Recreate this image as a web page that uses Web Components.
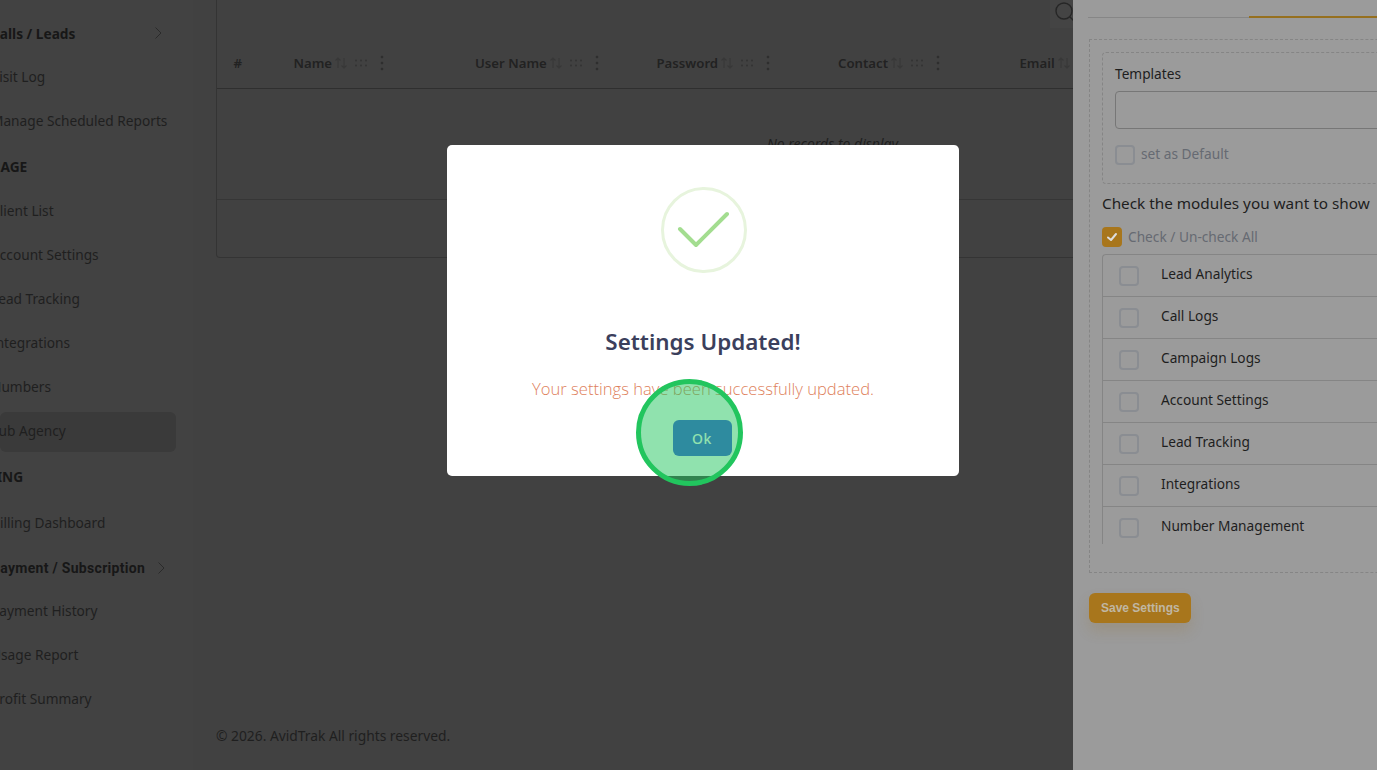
<!DOCTYPE html>
<html lang="en">
<head>
<meta charset="utf-8">
<title>Settings Updated</title>
<style>
  html, body { margin: 0; height: 100%; overflow: hidden; background: #414141; }
  body { font-family: "Noto Sans", "Open Sans", sans-serif; font-size: 13.7px; }
</style>
</head>
<body>
<app-page>
  <side-nav slot="nav">
    <nav-item bold chevron>Calls / Leads</nav-item>
    <nav-item>Visit Log</nav-item>
    <nav-item>Manage Scheduled Reports</nav-item>
    <nav-item heading>MANAGE</nav-item>
    <nav-item>Client List</nav-item>
    <nav-item>Account Settings</nav-item>
    <nav-item>Lead Tracking</nav-item>
    <nav-item>Integrations</nav-item>
    <nav-item>Numbers</nav-item>
    <nav-item active>Sub Agency</nav-item>
    <nav-item heading>BILLING</nav-item>
    <nav-item gap>Billing Dashboard</nav-item>
    <nav-item bold chevron roboto>Payment / Subscription</nav-item>
    <nav-item>Payment History</nav-item>
    <nav-item>Usage Report</nav-item>
    <nav-item>Profit Summary</nav-item>
  </side-nav>
  <data-table slot="main">
    <table-col slot="cols" plain>#</table-col>
    <table-col slot="cols">Name</table-col>
    <table-col slot="cols">User Name</table-col>
    <table-col slot="cols">Password</table-col>
    <table-col slot="cols">Contact</table-col>
    <table-col slot="cols">Email</table-col>
    No records to display.
  </data-table>
  <span slot="footer">© 2026. AvidTrak All rights reserved.</span>
  <settings-drawer slot="drawer">
    <module-row>Lead Analytics</module-row>
    <module-row>Call Logs</module-row>
    <module-row>Campaign Logs</module-row>
    <module-row>Account Settings</module-row>
    <module-row>Lead Tracking</module-row>
    <module-row>Integrations</module-row>
    <module-row>Number Management</module-row>
  </settings-drawer>
</app-page>
<alert-modal heading="Settings Updated!" message="Your settings have been successfully updated." confirm="Ok"></alert-modal>
<click-marker></click-marker>

<script>
// Colours are written as they look behind the backdrop, so there is no extra dimming layer

class AppPage extends HTMLElement {
  constructor() {
    super();
    this.shadow = this.attachShadow({ mode: 'open' });
  }
  connectedCallback() {
    this.shadow.innerHTML = `
      <style>
        :host { display: flex; height: 770px; overflow: hidden; }
        .main { flex: 1; min-width: 0; display: flex; flex-direction: column; padding: 0 0 24px 23px; }
        .footer { margin-top: auto; color: #1f1f1f; font-size: 13.800px; line-height: 20px; }
      </style>
      <slot name="nav"></slot>
      <div class="main">
        <slot name="main"></slot>
        <div class="footer"><slot name="footer"></slot></div>
      </div>
      <slot name="drawer"></slot>
    `;
  }
}

class SideNav extends HTMLElement {
  constructor() {
    super();
    this.shadow = this.attachShadow({ mode: 'open' });
  }
  connectedCallback() {
    this.shadow.innerHTML = `
      <style>
        :host { display: block; flex: none; width: 193px; height: 770px; overflow: hidden; background: #424242; box-sizing: border-box; padding-top: 10px; }
      </style>
      <slot></slot>
    `;
  }
}

class NavItem extends HTMLElement {
  constructor() {
    super();
    this.shadow = this.attachShadow({ mode: 'open' });
  }
  connectedCallback() {
    const chevron = this.hasAttribute('chevron')
      ? `<svg width="8" height="14" viewBox="0 0 8 14"><path d="M1.500 1.500l5.500 5.500-5.500 5.500" fill="none" stroke="#2a2a2a" stroke-width="1"/></svg>`
      : '';
    this.shadow.innerHTML = `
      <style>
        :host { display: block; height: 44px; margin-right: 17px; color: #1f1f1f; }
        :host([heading]) { margin-top: 2px; color: #171717; font-weight: 700; }
        :host([bold]) { color: #171717; font-weight: 700; }
        :host([roboto]) { font: 700 14px Roboto, sans-serif; letter-spacing: .3px; }
        :host([chevron]) { margin-right: 31px; }
        :host([gap]) { margin-top: 2px; }
        :host([active]) { height: 40px; margin-top: 4px; margin-bottom: 2px; background: #3a3a3a; border-radius: 6px; }
        .row { height: 100%; box-sizing: border-box; display: flex; align-items: center; gap: 12px; margin-left: -9px; white-space: nowrap; }
        :host([active]) .row { padding-bottom: 4px; }
        :host([heading]) .row { margin-left: -33px; }
        :host([bold]) .row { padding-top: 2px; justify-content: space-between; }
        :host([roboto]) .row { padding-top: 4px; }
        svg { flex: none; }
      </style>
      <div class="row"><span><slot></slot></span>${chevron}</div>
    `;
  }
}

class DataTable extends HTMLElement {
  constructor() {
    super();
    this.shadow = this.attachShadow({ mode: 'open' });
  }
  connectedCallback() {
    this.shadow.innerHTML = `
      <style>
        :host { display: block; flex: none; width: 1234px; border: solid #343434; border-width: 0 1px 1px; border-radius: 0 0 4px 4px; color: #1f1f1f; font-size: 14px; }
        .tools { height: 40px; display: flex; padding-left: 833px; }
        .search { width: 30px; height: 28px; background: #444; display: flex; }
        .cols { height: 49px; box-sizing: border-box; padding-bottom: 3px; display: flex; align-items: center; border-bottom: 1px solid #2f2f2f; }
        .empty { height: 111px; box-sizing: border-box; padding-bottom: 1px; display: flex; align-items: center; justify-content: center; font-style: italic; border-bottom: 1px solid #363636; }
        .pager { height: 57px; }
      </style>
      <div class="tools">
        <div class="search">
          <svg width="26" height="26" viewBox="0 0 26 26" style="margin-left:2px">
            <circle cx="12" cy="11" r="8" fill="none" stroke="#262626" stroke-width="1.400"/>
            <path d="M18 17l6 6" stroke="#262626" stroke-width="1.400"/>
          </svg>
        </div>
      </div>
      <div class="cols"><slot name="cols"></slot></div>
      <div class="empty"><slot></slot></div>
      <div class="pager"></div>
    `;
  }
}

class TableCol extends HTMLElement {
  constructor() {
    super();
    this.shadow = this.attachShadow({ mode: 'open' });
  }
  connectedCallback() {
    const tools = this.hasAttribute('plain') ? '' : `
      <svg class="sort" width="14" height="14" viewBox="0 0 14 14" fill="none" stroke="#383838" stroke-width="1.100">
        <path d="M4 12V2M1.500 4.500L4 2l2.500 2.500M10 2v10M7.500 9.500L10 12l2.500-2.500"/>
      </svg>
      <svg class="grip" width="14" height="8" viewBox="0 0 14 8" fill="#333">
        <circle cx="2" cy="1.500" r="1"/><circle cx="7" cy="1.500" r="1"/><circle cx="12" cy="1.500" r="1"/>
        <circle cx="2" cy="6.500" r="1"/><circle cx="7" cy="6.500" r="1"/><circle cx="12" cy="6.500" r="1"/>
      </svg>
      <svg class="more" width="4" height="16" viewBox="0 0 4 16" fill="#2e2e2e">
        <circle cx="2" cy="2" r="1.300"/><circle cx="2" cy="8" r="1.300"/><circle cx="2" cy="14" r="1.300"/>
      </svg>`;
    this.shadow.innerHTML = `
      <style>
        :host { display: flex; align-items: center; flex: none; width: 181.500px; font-size: 13.200px; font-weight: 600; color: #222; white-space: nowrap; }
        :host([plain]) { width: 76.500px; box-sizing: border-box; padding-left: 16.500px; }
        .sort { margin-left: 2px; }
        .grip { margin-left: 6px; }
        .more { margin-left: 12px; }
      </style>
      <slot></slot>${tools}
    `;
  }
}

class CheckBox extends HTMLElement {
  constructor() {
    super();
    this.shadow = this.attachShadow({ mode: 'open' });
  }
  connectedCallback() {
    const mark = this.hasAttribute('checked')
      ? `<svg width="12" height="12" viewBox="0 0 12 12"><path d="M2 6.500l3 2.500 5-6" fill="none" stroke="#ddd" stroke-width="2" stroke-linecap="round" stroke-linejoin="round"/></svg>`
      : '';
    this.shadow.innerHTML = `
      <style>
        :host { display: flex; flex: none; width: 20px; height: 20px; box-sizing: border-box; border: 2px solid #8a8d92; border-radius: 4px; align-items: center; justify-content: center; }
        :host([checked]) { background: #a8761c; border-color: #a8761c; }
      </style>
      ${mark}
    `;
  }
}

class ModuleRow extends HTMLElement {
  constructor() {
    super();
    this.shadow = this.attachShadow({ mode: 'open' });
  }
  connectedCallback() {
    this.shadow.innerHTML = `
      <style>
        :host { display: flex; align-items: center; flex: none; height: 42px; box-sizing: border-box; border-bottom: 1px solid #858585; padding-left: 16px; gap: 22px; color: #1e1e1e; }
        :host(:last-child) { border-bottom: 0; }
        span { margin-top: -5px; }
      </style>
      <check-box></check-box><span><slot></slot></span>
    `;
  }
}

class SettingsDrawer extends HTMLElement {
  constructor() {
    super();
    this.shadow = this.attachShadow({ mode: 'open' });
  }
  connectedCallback() {
    this.shadow.innerHTML = `
      <style>
        :host { display: block; position: fixed; top: 0; right: 0; bottom: 0; width: 304px; background: #9b9b9b; color: #1e1e1e; overflow: hidden; }
        .tabs { display: flex; height: 18px; margin-left: 15px; }
        .tabs div { box-sizing: border-box; border-bottom: 1px solid #868686; width: 161px; }
        .tabs .on { flex: 1; border-bottom: 2px solid #96701f; }
        .outer { width: 400px; margin: 21px 0 0 16px; height: 534px; box-sizing: border-box; border: 1px dashed #858585; padding: 12px 0 0 12px; }
        .inner { width: 400px; height: 132px; box-sizing: border-box; border: 1px dashed #858585; border-radius: 4px; padding: 11px 12px; }
        .label { line-height: 20px; }
        .input { width: 300px; height: 38px; margin-top: 7px; box-sizing: border-box; border: 1px solid #777; border-radius: 4px; }
        .line { display: flex; align-items: center; gap: 6px; color: #666a72; }
        .line span { margin-top: -2px; }
        .inner .line { margin-top: 16px; }
        .inner .line span { margin-top: -4px; }
        .show { margin-top: 8px; font-size: 15.300px; line-height: 22px; }
        .all { margin-top: 13px; }
        .list { width: 400px; height: 290px; margin-top: 7px; box-sizing: border-box; border: solid #858585; border-width: 1px 0 0 1px; border-radius: 4px 0 0 0; display: flex; flex-direction: column; overflow: hidden; }
        .save { display: inline-block; margin: 20px 0 0 16px; padding: 0 11px 0 12px; height: 30px; background: #a8761c; border-radius: 6px; color: #c0b7a3; font: 700 12px/30px "Liberation Sans", sans-serif; box-shadow: 0 8px 14px rgba(150,110,40,.2); }
      </style>
      <div class="tabs"><div></div><div class="on"></div></div>
      <div class="outer">
        <div class="inner">
          <div class="label">Templates</div>
          <div class="input"></div>
          <div class="line"><check-box></check-box><span>set as Default</span></div>
        </div>
        <div class="show">Check the modules you want to show</div>
        <div class="line all"><check-box checked></check-box><span>Check / Un-check All</span></div>
        <div class="list"><slot></slot></div>
      </div>
      <div class="save">Save Settings</div>
    `;
  }
}

class AlertModal extends HTMLElement {
  constructor() {
    super();
    this.shadow = this.attachShadow({ mode: 'open' });
  }
  connectedCallback() {
    this.shadow.innerHTML = `
      <style>
        :host { display: flex; flex-direction: column; align-items: center; position: fixed; left: 447px; top: 145px; width: 512px; height: 331px; background: #fff; border-radius: 5px; box-sizing: border-box; padding-top: 42px; }
        svg { display: block; margin-left: 2px; }
        h2 { margin: 53px 0 0; font: 600 22.400px/32px "Noto Sans", "Open Sans", sans-serif; color: #3b3f5c; }
        p { margin: 19px 0 0; font: 300 16.600px/24px "Open Sans", "Noto Sans", sans-serif; color: #de7f5c; }
        button { margin: 19px 2px 0 0; width: 59px; height: 36px; border: 0; border-radius: 6px; background: #3a51e0; color: #fff; font: 500 14px "Noto Sans", "Open Sans", sans-serif; letter-spacing: .5px; padding: 0; }
      </style>
      <svg width="86" height="86" viewBox="0 0 86 86">
        <circle cx="43" cy="43" r="41.500" fill="none" stroke="#e7f4dd" stroke-width="3"/>
        <path d="M19 42l16 16 31-31" fill="none" stroke="#a3dd90" stroke-width="4" stroke-linecap="round" stroke-linejoin="round"/>
      </svg>
      <h2>${this.getAttribute('heading')}</h2>
      <p>${this.getAttribute('message')}</p>
      <button type="button">${this.getAttribute('confirm')}</button>
    `;
  }
}

// Green ring of the recorded click, it lies over the modal
class ClickMarker extends HTMLElement {
  constructor() {
    super();
    this.shadow = this.attachShadow({ mode: 'open' });
  }
  connectedCallback() {
    this.shadow.innerHTML = `
      <style>
        :host { display: block; position: fixed; left: 636px; top: 379px; width: 107px; height: 107px; box-sizing: border-box; border: 5px solid #22c55e; border-radius: 50%; background: rgba(34,197,94,.5); }
      </style>
    `;
  }
}

customElements.define('app-page', AppPage);
customElements.define('side-nav', SideNav);
customElements.define('nav-item', NavItem);
customElements.define('data-table', DataTable);
customElements.define('table-col', TableCol);
customElements.define('check-box', CheckBox);
customElements.define('module-row', ModuleRow);
customElements.define('settings-drawer', SettingsDrawer);
customElements.define('alert-modal', AlertModal);
customElements.define('click-marker', ClickMarker);
</script>
</body>
</html>
